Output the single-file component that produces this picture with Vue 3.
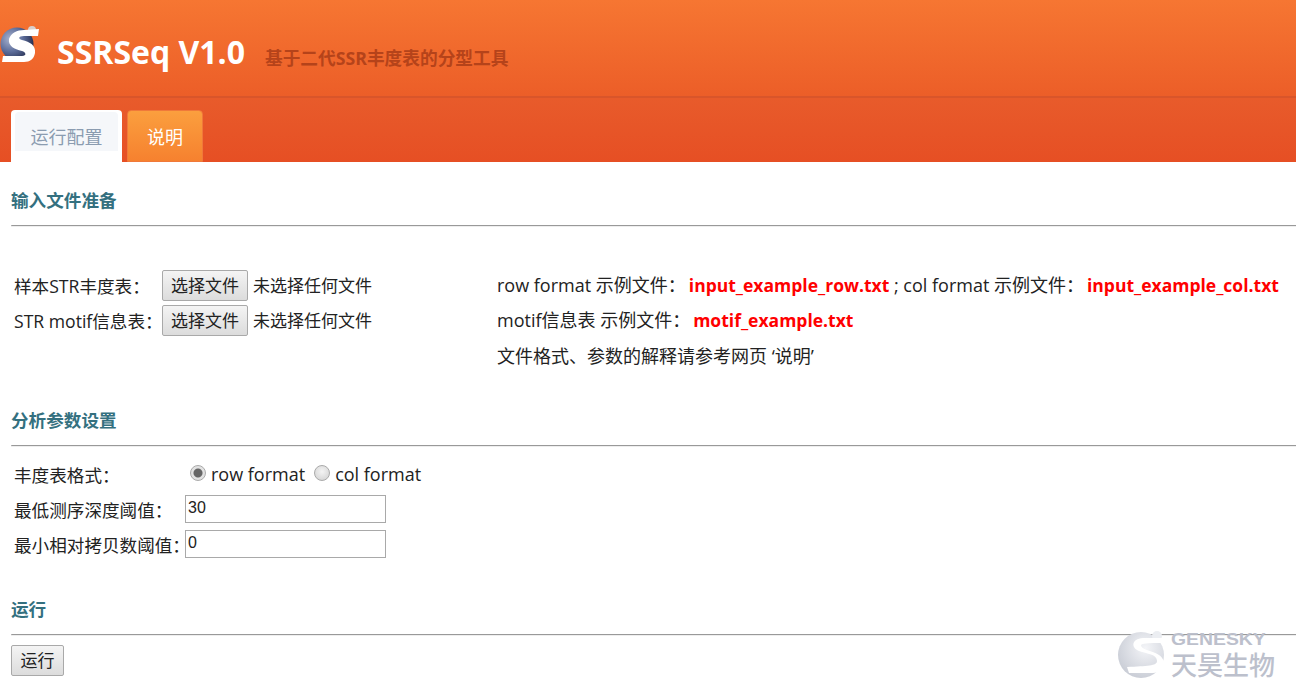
<script setup>
const fileRows = [
  { label: '样本STR丰度表：' },
  { label: 'STR motif信息表：' },
]
</script>

<template>
  <div class="page">
    <header class="top-bar">
      <svg class="logo" width="40" height="40" viewBox="0 0 40 40">
        <defs>
          <radialGradient id="ball" cx="0.3" cy="0.35" r="0.75">
            <stop offset="0" stop-color="#aab4cf" />
            <stop offset="0.5" stop-color="#5f6f9c" />
            <stop offset="1" stop-color="#1f2748" />
          </radialGradient>
        </defs>
        <circle cx="17" cy="18" r="16.5" fill="url(#ball)" />
        <circle cx="32" cy="4" r="4" fill="#d9cfcc" />
        <path d="M39 3 L38 10 L24 10 C18 10 18 13 22 14 C30 16 36 19 35 27 C34 33 30 36 24 36 L2 36 L3 30 L22 30 C27 30 26 26 22 25 C14 23 8 20 9 13 C11 7 17 4 24 4 Z" fill="#fff" />
      </svg>
      <h1 class="app-name">SSRSeq V1.0</h1>
      <span class="app-desc">基于二代SSR丰度表的分型工具</span>
    </header>

    <nav class="tab-bar">
      <a class="tab tab-active"><span>运行配置</span></a>
      <a class="tab tab-other">说明</a>
    </nav>

    <main class="content">
      <section class="block block-input">
        <h2 class="block-title">输入文件准备</h2>
        <hr class="rule" />
        <div class="input-grid">
          <div class="file-rows">
            <div v-for="row in fileRows" :key="row.label" class="file-row">
              <span class="file-label">{{ row.label }}</span>
              <button class="btn" type="button">选择文件</button>
              <span class="file-state">未选择任何文件</span>
            </div>
          </div>
          <div class="hints">
            <p>row format 示例文件：<a class="sample">input_example_row.txt</a> ; col format 示例文件：<a class="sample">input_example_col.txt</a></p>
            <p>motif信息表 示例文件：<a class="sample">motif_example.txt</a></p>
            <p>文件格式、参数的解释请参考网页 ‘说明’</p>
          </div>
        </div>
      </section>

      <section class="block block-params">
        <h2 class="block-title">分析参数设置</h2>
        <hr class="rule" />
        <div class="param-row param-radio">
          <span class="param-label radio-label">丰度表格式：</span>
          <i class="radio radio-on"></i><span class="radio-text">row format</span>
          <i class="radio"></i><span>col format</span>
        </div>
        <div class="param-row">
          <span class="param-label">最低测序深度阈值：</span>
          <input class="num-input" type="text" value="30" />
        </div>
        <div class="param-row">
          <span class="param-label">最小相对拷贝数阈值：</span>
          <input class="num-input" type="text" value="0" />
        </div>
      </section>

      <section class="block block-run">
        <h2 class="block-title">运行</h2>
        <hr class="rule rule-run" />
        <button class="btn btn-run" type="button">运行</button>
      </section>
    </main>

    <div class="watermark">
      <svg width="52" height="50" viewBox="0 0 52 50">
        <defs>
          <radialGradient id="wm" cx="0.6" cy="0.35" r="0.8">
            <stop offset="0" stop-color="#f4f5f8" />
            <stop offset="1" stop-color="#c2c6d0" />
          </radialGradient>
        </defs>
        <circle cx="24" cy="25" r="23" fill="url(#wm)" />
        <circle cx="40" cy="6" r="5" fill="#eceef2" />
        <path d="M50 8 L26 8 C14 9 14 18 22 21 C30 24 40 24 40 31 C40 36 30 36 10 37 L12 43 L36 43 C48 42 50 30 42 25 C34 20 24 20 24 15 C26 13 36 13 50 13 Z" fill="#fff" />
      </svg>
      <div class="wm-text">
        <span class="wm-en">GENESKY</span>
        <span class="wm-cn">天昊生物</span>
      </div>
    </div>
  </div>
</template>

<style>
html,
body {
  margin: 0;
  background: #fff;
  overflow: hidden;
}
</style>

<style scoped>
.page {
  position: relative;
  width: 1296px;
  height: 686px;
  overflow: hidden;
  color: #222;
  font-family: "Open Sans", "Noto Sans CJK SC", sans-serif;
  font-size: 18px;
}

.top-bar {
  display: flex;
  align-items: flex-start;
  height: 96px;
  border-bottom: 2px solid #d9552a;
  background: linear-gradient(180deg, #f67632, #ec5e28);
  box-sizing: content-box;
}

.logo {
  flex: none;
  margin-top: 26px;
}

.app-name {
  margin: 31px 0 0 17px;
  color: #fff;
  font-size: 32px;
  font-weight: 700;
  line-height: 42px;
  white-space: nowrap;
}

.app-desc {
  margin: 46px 0 0 20px;
  color: #b5431a;
  font-size: 17.7px;
  font-weight: 700;
  line-height: 24px;
}

.tab-bar {
  display: flex;
  align-items: flex-end;
  gap: 5px;
  height: 64px;
  padding-left: 11px;
  background: linear-gradient(180deg, #e85b2b, #e64f24);
}

.tab {
  box-sizing: border-box;
  height: 52px;
  border-radius: 4px 4px 0 0;
  text-align: center;
  line-height: 52px;
}

.tab-active {
  width: 111px;
  padding: 0 4px;
  background: #fff;
  color: #8b9cb0;
}

.tab-active span {
  display: block;
  height: 39px;
  margin-top: 2px;
  line-height: 50px;
  background: #f5f7fa;
  border-radius: 4px 4px 0 0;
}

.tab-other {
  width: 76px;
  border: 1px solid #f0793a;
  background: linear-gradient(180deg, #fb9f3e, #f6812f);
  color: #fff;
}

.content {
  padding-left: 11px;
}

.block-title {
  margin: 0;
  color: #34707f;
  font-size: 17.6px;
  font-weight: 700;
  line-height: 24px;
}

.rule {
  height: 0;
  margin: 13px 0 0;
  border: 0;
  border-top: 1px solid #999;
  border-left: 1px solid #ccc;
  box-shadow: 0 1px 0 #eee;
}

.block-input {
  padding-top: 26px;
}

.input-grid {
  display: flex;
  margin-top: 44px;
  padding-left: 3px;
}

.file-rows {
  display: flex;
  flex-direction: column;
  gap: 4px;
  width: 483px;
  flex: none;
}

.file-row {
  display: flex;
  align-items: center;
  height: 31px;
}

.file-label {
  width: 148px;
  flex: none;
  font-size: 17.6px;
  line-height: 28px;
  white-space: nowrap;
}

.file-state {
  margin-left: 5px;
  font-size: 17px;
  line-height: 28px;
}

.btn {
  box-sizing: border-box;
  height: 31px;
  padding: 0 8px;
  border: 1px solid #a9a9a9;
  border-radius: 2px;
  background: linear-gradient(180deg, #f4f4f4, #dcdcdc);
  color: #222;
  font-family: inherit;
  font-size: 17px;
  line-height: 29px;
}

.hints {
  margin-top: 1px;
}

.hints p {
  height: 35.4px;
  margin: 0;
  line-height: 28px;
  white-space: nowrap;
}

.sample {
  margin-left: 3px;
  color: #f00;
  font-size: 17.5px;
  font-weight: 700;
}

.block-params {
  padding-top: 31px;
}

.param-row {
  display: flex;
  align-items: center;
  height: 28px;
  margin-top: 7px;
  padding-left: 3px;
}

.param-radio {
  margin-top: 14px;
}

.param-label {
  width: 171px;
  flex: none;
  font-size: 17.6px;
  white-space: nowrap;
}

.radio-label {
  width: 176px;
}

.radio {
  box-sizing: border-box;
  display: block;
  width: 16px;
  height: 16px;
  margin: 0 5px 2px 0;
  border: 1px solid #aaa;
  border-radius: 50%;
  background: radial-gradient(circle at 50% 40%, #f4f4f4, #cfcfcf);
}

.radio-on {
  background: radial-gradient(circle, #666 0 4px, #e2e2e2 5px);
}

.radio-text {
  margin-right: 9px;
}

.num-input {
  box-sizing: border-box;
  width: 201px;
  height: 28px;
  padding: 0 2px 2px;
  border: 1px solid #a9a9a9;
  color: #222;
  font-family: "Liberation Sans", sans-serif;
  font-size: 16px;
  outline: none;
}

.block-run {
  padding-top: 39px;
}

.rule-run {
  margin-top: 13px;
}

.btn-run {
  display: block;
  margin-top: 10px;
  padding: 0 8.5px;
  font-size: 17px;
}

.watermark {
  position: absolute;
  left: 1117px;
  top: 630px;
  display: flex;
  gap: 2px;
}

.wm-text {
  display: flex;
  flex-direction: column;
  color: #bcc0cc;
  white-space: nowrap;
}

.wm-en {
  display: block;
  font-family: "Liberation Sans", sans-serif;
  font-size: 17px;
  font-weight: 700;
  line-height: 20px;
  transform: scaleX(1.14);
  transform-origin: left center;
}

.wm-cn {
  font-size: 26px;
  font-weight: 500;
  line-height: 30px;
}
</style>
